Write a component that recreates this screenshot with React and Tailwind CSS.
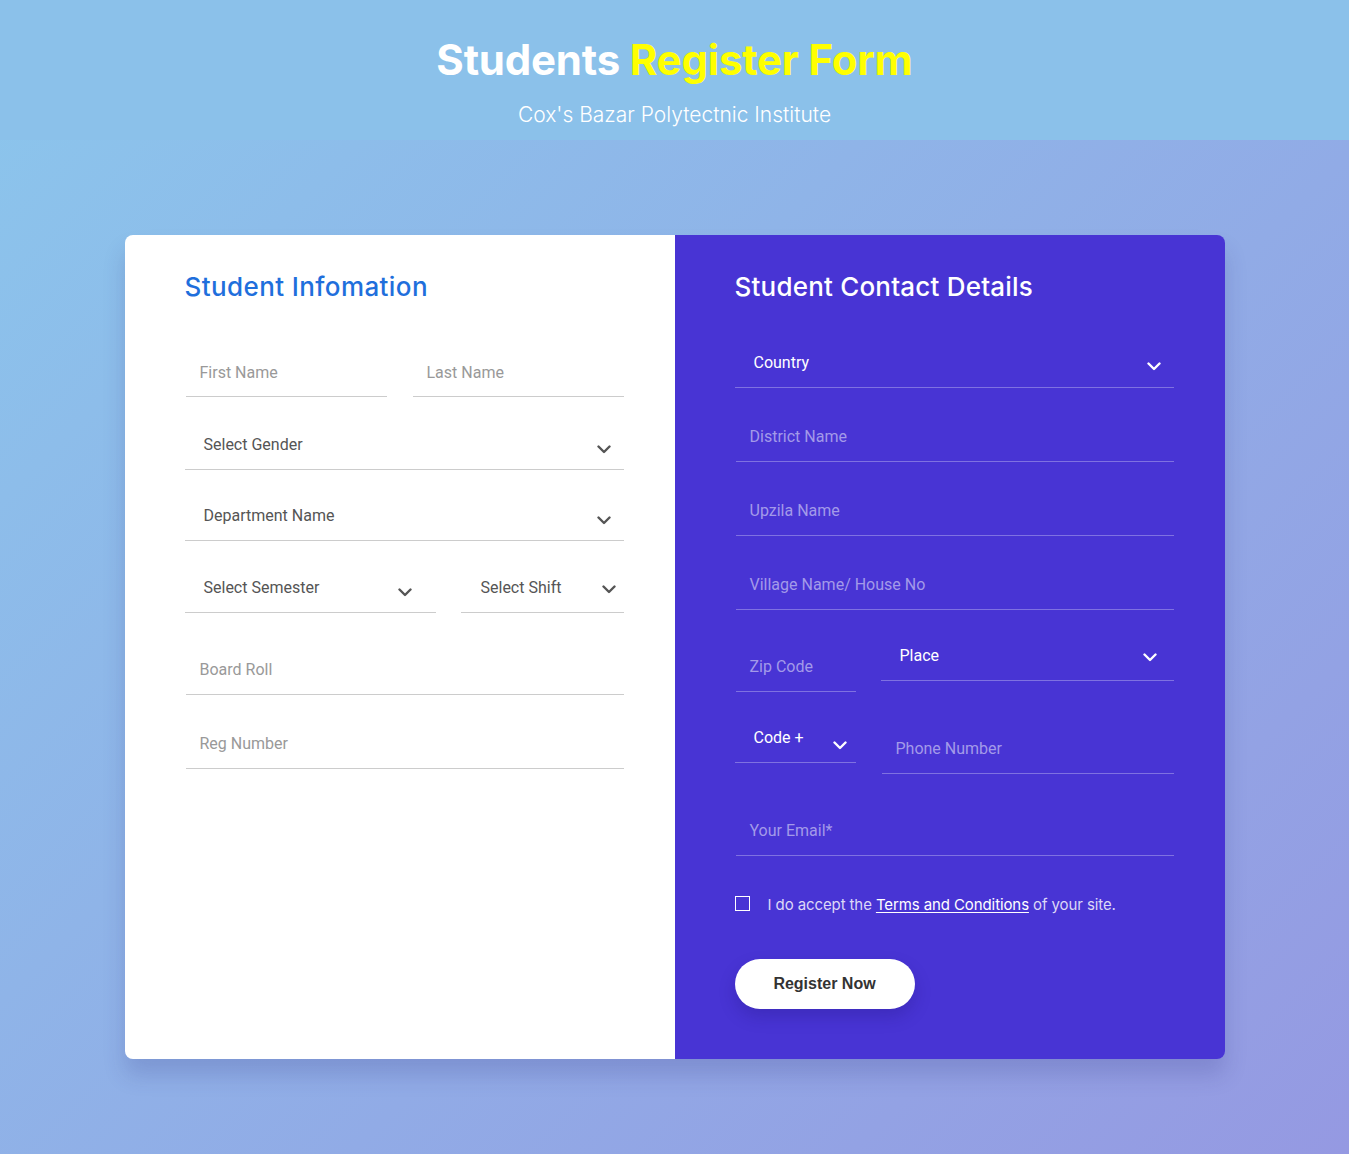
import React from 'react';

const Chevron = ({ className = '' }) => (
    <svg width="14" height="9" viewBox="0 0 14 9" className={className}>
        <polyline points="1.5,1.5 7,7 12.5,1.5" fill="none" stroke="currentColor" strokeWidth="2.4" strokeLinecap="round" strokeLinejoin="round" />
    </svg>
);

// underline input, left panel
const LInput = ({ label, className = '', pt = 'pt-[3px]' }) => (
    <div className={`h-[50px] border-b border-[#cccccc] flex items-center pl-[14px] ${pt} text-[16px] text-[#999999] ${className}`}>
        {label}
    </div>
);

const LSelect = ({ label, className = '', pl = 'pl-[19px]', pr = 'pr-[13px]', chevronClass = 'mt-[8px]' }) => (
    <div className={`h-[50px] border-b border-[#cccccc] flex items-center justify-between ${pl} ${pr} pt-[1px] text-[16px] text-[#555555] ${className}`}>
        <span>{label}</span>
        <Chevron className={`text-[#555555] ${chevronClass}`} />
    </div>
);

const RInput = ({ label, className = '' }) => (
    <div className={`h-[50px] border-b border-[#7f71e1] flex items-center pl-[14px] text-[16px] text-[#a39ae9] ${className}`}>
        {label}
    </div>
);

const RSelect = ({ label, className = '', pr = 'pr-[13px]', chevronClass = 'mt-[8px]' }) => (
    <div className={`h-[50px] border-b border-[#7f71e1] flex items-center justify-between pl-[19px] ${pr} text-[16px] text-white ${className}`}>
        <span>{label}</span>
        <Chevron className={`text-white ${chevronClass}`} />
    </div>
);

export default function App() {
    return (
        <div className="min-h-[1154px] bg-[linear-gradient(135deg,#8BC6EC_0%,#9599E2_100%)] font-['Roboto',sans-serif]">

            {/* Header */}
            <header className="h-[140px] bg-[#8bc1ea] flex flex-col items-center pt-[35px]">
                <h1 className="text-[42px] leading-[50px] font-bold text-white font-['Inter',sans-serif] tracking-[-0.2px]">
                    Students <span className="text-[#ffff00]">Register Form</span>
                </h1>
                <p className="mt-[17px] text-[21px] leading-[26px] font-light text-white font-['Inter',sans-serif]">
                    Cox's Bazar Polytectnic Institute
                </p>
            </header>

            <div className="flex justify-center pt-[95px] pb-[95px]">
                <div className="w-[1100px] h-[824px] flex rounded-lg overflow-hidden shadow-[0_16px_22px_rgba(40,40,120,0.18)]">

                    {/* Left */}
                    <div className="w-[550px] bg-white pl-[60px] pr-[51px] pt-[36px]">
                        <h2 className="text-[26px] leading-[32px] font-medium text-[#1f6fdc] font-['Inter',sans-serif] tracking-[0.4px]">
                            Student Infomation
                        </h2>
                        <div className="flex mt-[44px]">
                            <LInput label="First Name" className="ml-[1px] w-[201px]" />
                            <LInput label="Last Name" className="ml-[26px] w-[211px]" />
                        </div>
                        <LSelect label="Select Gender" className="mt-[23px]" />
                        <LSelect label="Department Name" className="mt-[21px]" />
                        <div className="flex mt-[22px]">
                            <LSelect label="Select Semester" className="w-[251px]" pr="pr-[24px]" />
                            <LSelect label="Select Shift" className="ml-[25px] w-[163px]" pl="pl-[20px]" pr="pr-[8px]" chevronClass="mt-[2px]" />
                        </div>
                        <LInput label="Board Roll" className="mt-[32px] ml-[1px]" pt="pt-0" />
                        <LInput label="Reg Number" className="mt-[24px] ml-[1px]" pt="pt-0" />
                    </div>

                    {/* Right */}
                    <div className="w-[550px] bg-[#4834d4] pl-[60px] pr-[51px] pt-[36px]">
                        <h2 className="text-[26px] leading-[32px] font-medium text-white font-['Inter',sans-serif] tracking-[0.2px]">
                            Student Contact Details
                        </h2>
                        <RSelect label="Country" className="mt-[35px]" />
                        <RInput label="District Name" className="mt-[24px] ml-[1px]" />
                        <RInput label="Upzila Name" className="mt-[24px] ml-[1px]" />
                        <RInput label="Village Name/ House No" className="mt-[24px] ml-[1px]" />
                        <div className="flex items-start mt-[21px]">
                            <RInput label="Zip Code" className="mt-[11px] ml-[1px] w-[120px]" />
                            <RSelect label="Place" className="ml-[25px] w-[293px]" pr="pr-[17px]" chevronClass="mt-[3px]" />
                        </div>
                        <div className="flex items-start mt-[21px]">
                            <RSelect label="Code +" className="w-[121px]" pr="pr-[9px]" chevronClass="mt-[16px]" />
                            <RInput label="Phone Number" className="mt-[11px] ml-[26px] w-[292px]" />
                        </div>
                        <RInput label="Your Email*" className="mt-[32px] ml-[1px]" />

                        <label className="flex items-center mt-[38px] font-['Inter',sans-serif]">
                            <span className="w-[15px] h-[15px] border-[1.5px] border-white -mt-[4px]" />
                            <span className="ml-[18px] text-[15px] text-[#dcd8f7] tracking-[-0.1px]">
                                I do accept the <span className="text-white underline underline-offset-2">Terms and Conditions</span> of your site.
                            </span>
                        </label>

                        <button className="mt-[42px] w-[180px] h-[50px] rounded-full bg-white text-[16px] font-bold text-[#333333] font-['Liberation_Sans',sans-serif] shadow-[0_8px_16px_rgba(30,20,120,0.25)]">
                            Register Now
                        </button>
                    </div>
                </div>
            </div>
        </div>
    );
}
